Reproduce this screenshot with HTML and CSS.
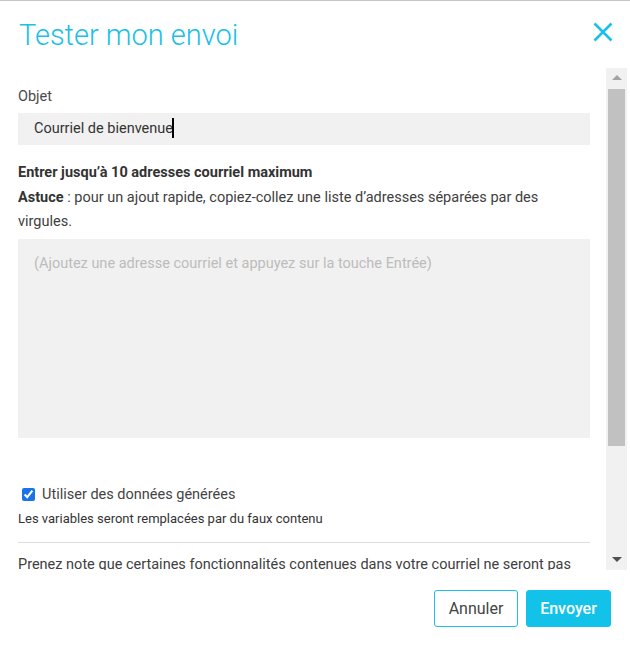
FILE: index.html
```html
<!DOCTYPE html>
<html lang="fr">
<head>
<meta charset="utf-8">
<title>Tester mon envoi</title>
<link rel="stylesheet" href="styles.css">
</head>
<body>
<div class="modal">
  <header class="modal-header">
    <h1 class="modal-title">Tester mon envoi</h1>
    <button class="close" aria-label="Fermer">
      <svg width="20" height="20" viewBox="0 0 20 20"><path d="M1.5 1.5 L18.5 18.5 M18.5 1.5 L1.5 18.5" stroke="#1bbfe8" stroke-width="2.6" fill="none"/></svg>
    </button>
  </header>
  <div class="modal-body">
    <div class="content">
      <div class="label">Objet</div>
      <div class="input">Courriel de bienvenue<span class="caret"></span></div>
      <div class="heading">Entrer jusqu’à 10 adresses courriel maximum</div>
      <p class="tip"><strong>Astuce</strong> : pour un ajout rapide, copiez-collez une liste d’adresses séparées par des virgules.</p>
      <div class="textarea">(Ajoutez une adresse courriel et appuyez sur la touche Entrée)</div>
      <label class="check"><input type="checkbox" checked> <span>Utiliser des données générées</span></label>
      <div class="small">Les variables seront remplacées par du faux contenu</div>
      <hr class="sep">
      <p class="note">Prenez note que certaines fonctionnalités contenues dans votre courriel ne seront pas disponibles dans le courriel de test.</p>
    </div>
    <div class="scrollbar">
      <div class="arrow up"></div>
      <div class="thumb"></div>
      <div class="track-rest"></div>
      <div class="arrow down"></div>
    </div>
  </div>
  <footer class="modal-footer">
    <button class="btn btn-outline">Annuler</button>
    <button class="btn btn-primary">Envoyer</button>
  </footer>
</div>
</body>
</html>
```

FILE: styles.css
```css
html, body {
  margin: 0;
  padding: 0;
  background: #fff;
}
body {
  font-family: Roboto, "Liberation Sans", sans-serif;
  color: #404040;
  font-size: 14.5px;
}
.modal {
  width: 630px;
  height: 646px;
  border-top: 1px solid #c6c6c6;
  box-sizing: border-box;
  display: flex;
  flex-direction: column;
}
.modal-header {
  height: 67px;
  display: flex;
  align-items: flex-start;
  justify-content: space-between;
  padding: 0 17px 0 19px;
  box-sizing: border-box;
}
.modal-title {
  margin: 0;
  margin-top: 14px;
  font-weight: 300;
  font-size: 29px;
  line-height: 40px;
  color: #1bbfe8;
}
.close {
  border: 0;
  background: none;
  padding: 0;
  margin-top: 21px;
  width: 20px;
  height: 20px;
  cursor: pointer;
}
.close svg { display: block; }
.modal-body {
  display: flex;
  height: 502px;
}
.content {
  width: 572px;
  margin-left: 18px;
  overflow: hidden;
  padding-top: 19px;
  box-sizing: border-box;
}
.label {
  line-height: 20px;
  height: 20px;
  margin-bottom: 6px;
  color: #4a4a4a;
}
.input {
  height: 32px;
  background: #f1f1f1;
  padding-left: 16px;
  line-height: 32px;
  color: #333;
}
.caret {
  display: inline-block;
  width: 2px;
  height: 20px;
  background: #000;
  vertical-align: -5px;
  margin-left: -1px;
}
.heading {
  margin-top: 18px;
  font-weight: 700;
  line-height: 20px;
  color: #333;
}
.tip {
  margin: 3px 0 5px;
  line-height: 24px;
}
.tip strong { color: #333; }
.textarea {
  height: 199px;
  background: #f1f1f1;
  box-sizing: border-box;
  padding: 15px 16px;
  line-height: 20px;
  color: #bcbcbc;
}
.check {
  display: flex;
  align-items: center;
  margin-top: 46px;
  height: 20px;
}
.check input {
  width: 13px;
  height: 13px;
  margin: 0 0 0 4px;
  accent-color: #1a73e8;
}
.check span {
  margin-left: 7px;
  color: #444;
}
.small {
  margin-top: 7px;
  font-size: 13px;
  line-height: 16px;
  color: #333;
}
.sep {
  border: 0;
  border-top: 1px solid #dcdcdc;
  margin: 15px 0 0;
}
.note {
  margin: 12px 0 0;
  line-height: 20px;
}
.scrollbar {
  width: 21px;
  margin-left: 16px;
  background: #f1f1f1;
  display: flex;
  flex-direction: column;
  align-items: center;
}
.arrow {
  width: 0;
  height: 0;
  border-left: 5px solid transparent;
  border-right: 5px solid transparent;
}
.arrow.up {
  margin-top: 7px;
  border-bottom: 5px solid #a3a3a3;
  margin-bottom: 9px;
}
.thumb {
  width: 17px;
  height: 357px;
  background: #c1c1c1;
}
.track-rest { flex: 1; }
.arrow.down {
  border-top: 5px solid #505050;
  margin-bottom: 8px;
}
.modal-footer {
  display: flex;
  justify-content: flex-end;
  gap: 8px;
  padding: 20px 19px 0 0;
}
.btn {
  height: 37px;
  border-radius: 3px;
  font-family: Roboto, "Liberation Sans", sans-serif;
  font-size: 16px;
  padding: 0;
  cursor: pointer;
}
.btn-outline {
  width: 84px;
  background: #fff;
  border: 1px solid #1bbfe8;
  color: #444;
}
.btn-primary {
  width: 85px;
  background: #12c2e9;
  border: 1px solid #12c2e9;
  color: #fff;
  font-weight: 500;
}
```
